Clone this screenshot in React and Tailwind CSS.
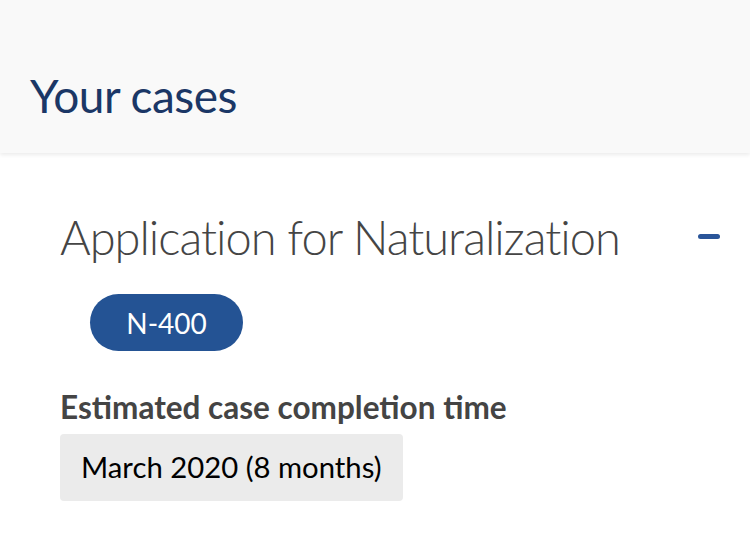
export default function App() {
  return (
    <div className="min-h-screen bg-white font-['Lato','Liberation_Sans',sans-serif]">
      {/* Header */}
      <div className="relative h-[153px] bg-[#f9f9f9] shadow-[0_2px_4px_rgba(0,0,0,0.08)] flex items-end px-[30px] pb-[34px]">
        <h1 className="text-[46px] leading-none text-[#1b3766] tracking-[-0.5px]">Your cases</h1>
      </div>

      {/* Case */}
      <div className="pl-[60px] pr-[30px] pt-[61px]">
        <div className="flex items-start justify-between">
          <h2 className="text-[47px] leading-none font-light text-[#454545] tracking-[-1px] whitespace-nowrap">
            Application for Naturalization
          </h2>
          <span className="block mt-[20px] w-[22px] h-[5px] rounded-full bg-[#2a5599]" />
        </div>

        <div className="mt-[33px] ml-[30px]">
          <span className="inline-flex items-center justify-center w-[153px] h-[57px] rounded-full bg-[#245394] text-white text-[28px]">
            N-400
          </span>
        </div>

        <div className="mt-[41px] text-[31.5px] leading-none font-bold text-[#444]">
          Estimated case completion time
        </div>
        <div className="mt-[10px] flex items-center w-[343px] h-[67px] px-[21px] rounded-[4px] bg-[#ebebeb] text-[29.3px] leading-none text-black">
          March 2020 (8 months)
        </div>
      </div>
    </div>
  )
}
